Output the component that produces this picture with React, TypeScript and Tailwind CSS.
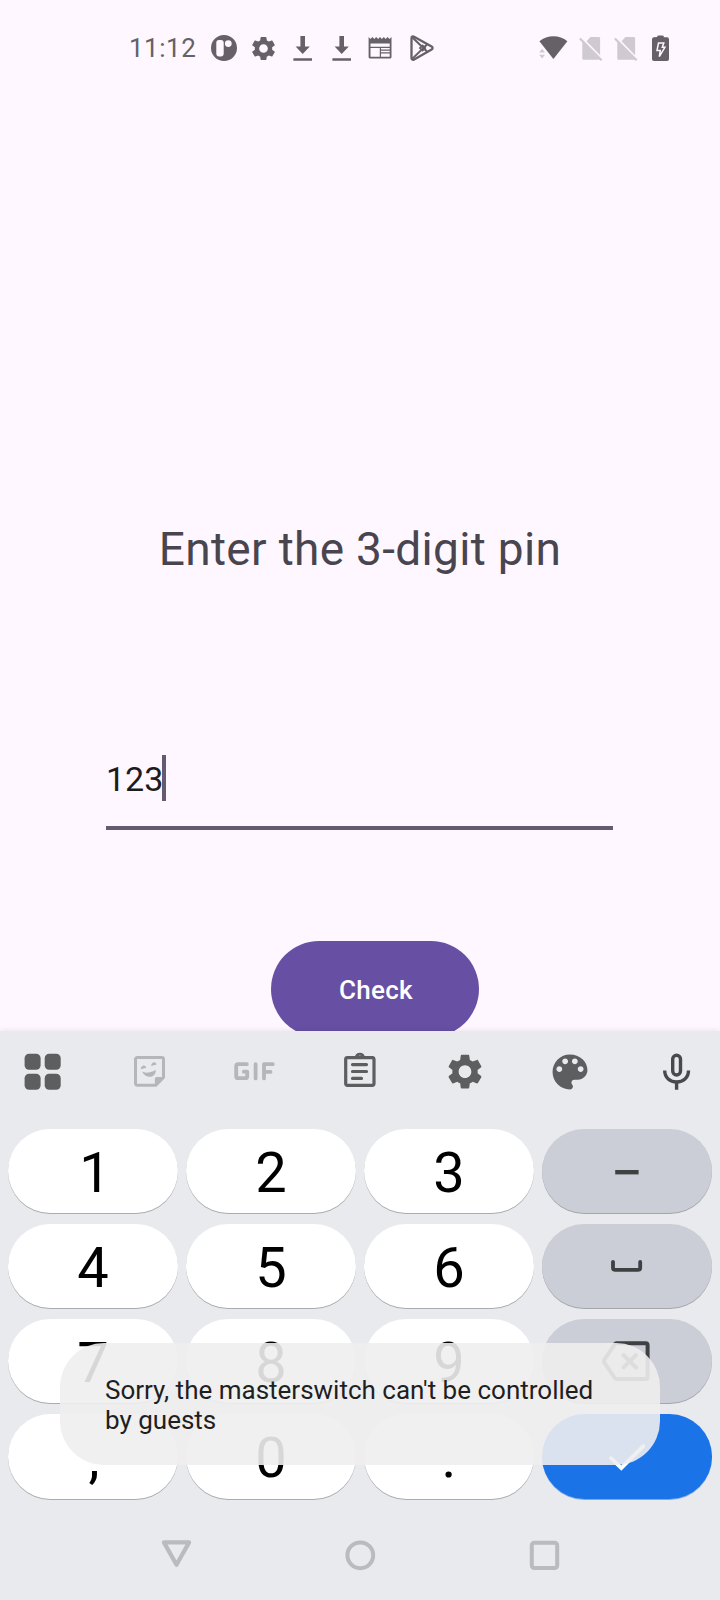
import type { ReactNode } from "react";

type IconProps = { box: string; className: string; children: ReactNode };

function Icon({ box, className, children }: IconProps) {
  return (
    <svg viewBox={box} className={`block shrink-0 ${className}`} fill="currentColor" aria-hidden="true">
      {children}
    </svg>
  );
}

const GEAR =
  "M19.14 12.94c.04-.3.06-.61.06-.94 0-.32-.02-.64-.07-.94l2.03-1.58c.18-.14.23-.41.12-.61l-1.92-3.32c-.12-.22-.37-.29-.59-.22l-2.39.96c-.5-.38-1.03-.7-1.62-.94l-.36-2.54c-.04-.24-.24-.41-.48-.41h-3.84c-.24 0-.43.17-.47.41l-.36 2.54c-.59.24-1.13.57-1.62.94l-2.39-.96c-.22-.08-.47 0-.59.22L2.74 8.87c-.12.21-.08.47.12.61l2.03 1.58c-.05.3-.09.63-.09.94s.02.64.07.94l-2.03 1.58c-.18.14-.23.41-.12.61l1.92 3.32c.12.22.37.29.59.22l2.39-.96c.5.38 1.03.7 1.62.94l.36 2.54c.05.24.24.41.48.41h3.84c.24 0 .44-.17.47-.41l.36-2.54c.59-.24 1.13-.56 1.62-.94l2.39.96c.22.08.47 0 .59-.22l1.92-3.32c.12-.22.07-.47-.12-.61l-2.01-1.58zM12 15.6c-1.98 0-3.6-1.62-3.6-3.6s1.62-3.6 3.6-3.6 3.6 1.62 3.6 3.6-1.62 3.6-3.6 3.6z";

function DownloadIcon() {
  return (
    <Icon box="0 0 20 26" className="h-[26px] w-5">
      <path d="M7.4 1h4.600v10.500h4.800L9.700 18.900 2.600 11.500h4.800zM.4 23.300h18.600v2.500H.4z" />
    </Icon>
  );
}

function SimOffIcon() {
  return (
    <Icon box="0 0 24 26" className="h-[26px] w-6 text-[#cfc9d1]">
      <path d="M11.400 2H19.800a1.300 1.300 0 0 1 1.300 1.300V20.200L7.600 6.300zM3.300 6.500 21 24.700H4.500a1.200 1.200 0 0 1-1.200-1.200z" />
      <path d="M.9 3.400 22.600 25.300" stroke="currentColor" strokeWidth="2.200" />
    </Icon>
  );
}

function StatusBar() {
  return (
    <header className="flex h-24 items-center pl-[129px] text-[#656167]">
      <span className="w-[82px] text-[26px] leading-none tracking-[0.5px]">11:12</span>
      <Icon box="0 0 26 26" className="h-[26px] w-[26px]">
        <path
          fillRule="evenodd"
          d="M13 0a13 13 0 1 1 0 26 13 13 0 0 1 0-26zM8.400 5A2.900 2.900 0 0 0 5.300 8v10.600a2.900 2.900 0 0 0 2.900 2.900h1.600a2.900 2.900 0 0 0 2.900-2.900V8a2.900 2.900 0 0 0-2.900-3zM17.300 5.200a3.400 3.400 0 1 0 0 6.800 3.400 3.400 0 0 0 0-6.800z"
        />
      </Icon>
      <Icon box="0 0 24 24" className="ml-[12px] h-[29px] w-[29px]">
        <path d={GEAR} />
      </Icon>
      <div className="ml-[15px] flex gap-[19px]">
        <DownloadIcon />
        <DownloadIcon />
      </div>
      <Icon box="0 0 24 22" className="ml-4 h-[22px] w-6">
        <path
          fillRule="evenodd"
          d="M.6 0l1.900 2L4.400 0l1.900 2L8.200 0l1.900 2L12 0l1.900 2L15.800 0l1.900 2L19.600 0l1.900 2L23.500 0v20a1.600 1.600 0 0 1-1.600 1.600H2.200A1.600 1.600 0 0 1 .6 20zM2.500 6.500v3.200h19.200V6.500zM2.500 11v8.700h9.300V11zM13 11v1.500h8.700V11zM13 13.800v1.500h8.700v-1.500zM13 16.600v3.100h8.700v-3.100z"
        />
      </Icon>
      <Icon box="0 0 24 26" className="ml-[18px] h-[26px] w-6">
        <g fill="none" stroke="currentColor" strokeWidth="2.300" strokeLinejoin="round">
          <path d="M1.500 3.200c0-1.600 1.300-2.300 2.600-1.500L21.600 11.500c1.300.8 1.300 2.200 0 3L4.100 24.400c-1.300.8-2.600.1-2.600-1.500z" />
          <path d="M2.200 2.200 17.500 17M2.200 23.900 17.500 9" strokeWidth="2" />
        </g>
        <path fillRule="evenodd" d="M12.600 9.200l3.900 3.800-3.900 3.800L8.700 13zM12.600 11.400 10.900 13l1.700 1.600 1.700-1.600z" />
      </Icon>
      <Icon box="0 0 29 26" className="ml-[105px] h-[26px] w-[29px]">
        <path d="M.4 6.200C8.400-.3 20.400-.3 28.400 6.200L14.400 24z" />
        <path d="M.2 17.400 3.100 13.800 6 17.400zM.2 19.800 3.100 23.600 6 19.800z" fill="#cfc9d1" />
      </Icon>
      <div className="ml-[11px] flex gap-[11px]">
        <SimOffIcon />
        <SimOffIcon />
      </div>
      <Icon box="0 0 17 26" className="ml-[14px] h-[26px] w-[17px]">
        <path d="M5.200 2V1.600A1.200 1.200 0 0 1 6.400.6h4.200a1.200 1.200 0 0 1 1.200 1V2.300H15a2 2 0 0 1 2 2v19.600a2 2 0 0 1-2 2H2a2 2 0 0 1-2-2V4.300a2 2 0 0 1 2-2z" />
        <path d="M6.500 8h5.300l-1.500 4.300h2.600L7.300 21.700l1-6.300H5z" fill="none" stroke="#fef7ff" strokeWidth="1.500" />
      </Icon>
    </header>
  );
}

function PinForm() {
  return (
    <main className="flex h-[935px] flex-col overflow-hidden">
      <h1 className="mt-[426px] shrink-0 text-center text-[46px] leading-[54px] tracking-[0.320px] whitespace-nowrap text-[#49454f]">
        Enter the 3-digit pin
      </h1>
      <div className="mt-[179px] ml-[106px] flex h-[75px] w-[507px] shrink-0 items-start border-b-4 border-[#655b71]">
        <span className="w-[56px] text-[34px] leading-[48px] text-[#1d1b20]">123</span>
        <span className="h-[46px] w-1 bg-[#655b71]" />
      </div>
      <button className="mt-[111px] ml-[271px] flex h-24 w-[208px] shrink-0 items-center justify-center rounded-full bg-[#6750a4] pt-0.5 pl-0.5 text-[26px] font-medium tracking-[0.300px] text-white">
        Check
      </button>
    </main>
  );
}

function Toolbar() {
  return (
    <div className="flex h-[98px] items-start pt-[21px] pl-6 text-[#5c5e60]">
      <Icon box="0 0 38 38" className="mt-px h-[38px] w-[38px]">
        <rect x=".6" y=".8" width="16" height="16" rx="4.500" />
        <rect x="20.700" y=".8" width="16" height="16" rx="4.500" />
        <rect x=".6" y="20.800" width="16" height="16" rx="4.500" />
        <rect x="20.700" y="20.800" width="16" height="16" rx="4.500" />
      </Icon>
      <Icon box="0 0 32 38" className="ml-[72px] h-[38px] w-8 text-[#b4b6b9]">
        <path
          d="M3.200 5.600H27.800A1.700 1.700 0 0 1 29.500 7.300V25.500L21.800 33.200H3.200A1.700 1.700 0 0 1 1.500 31.500V7.300A1.700 1.700 0 0 1 3.200 5.600z"
          fill="none"
          stroke="currentColor"
          strokeWidth="3"
        />
        <path d="M20.800 34V27a2 2 0 0 1 2-2H30z" />
        <path d="M8 19.600c3.500 1.900 8.300 1.100 13.700-1.600.6 8.200-10.200 9.400-13.700 1.600zM6.800 17.200c.2-4.100 4.600-4.900 5.400-1.500zM17.200 14c.2-4.100 4.600-4.900 5.400-1.500z" />
      </Icon>
      <Icon box="0 0 42 38" className="ml-[68px] h-[38px] w-[42px] text-[#b4b6b9]">
        <g fill="none" stroke="currentColor" strokeWidth="3.800" strokeLinecap="round" strokeLinejoin="round">
          <path d="M12.800 12.200H4.200a2 2 0 0 0-2 2v10a2 2 0 0 0 2 2h7a2 2 0 0 0 2-2v-4.500H9.800M21.600 12.200v14.200M38.800 12.200H30v14.200M30 19.900h6.500" />
        </g>
      </Icon>
      <Icon box="0 0 32 38" className="ml-[68px] h-[38px] w-8">
        <path
          d="M3.200 5.600H28.800A1.500 1.500 0 0 1 30 7V31.800a1.500 1.500 0 0 1-1.500 1.500H3.200a1.500 1.500 0 0 1-1.500-1.500V7A1.500 1.500 0 0 1 3.200 5.600zM8.500 12.600h14M8.500 19.500h14M8.500 26.400h9"
          fill="none"
          stroke="currentColor"
          strokeWidth="3.200"
          strokeLinecap="round"
        />
        <path fillRule="evenodd" d="M10.500 6C11 2.500 13 .7 15.900.7S20.800 2.500 21.300 6zM15.900 3.500a1.500 1.500 0 1 0 0 3 1.500 1.500 0 0 0 0-3z" />
      </Icon>
      <Icon box="1.200 1.400 21.600 21.600" className="mt-px ml-[70px] h-[38px] w-[38px]">
        <path d={GEAR} />
      </Icon>
      <Icon box="2.200 2.200 19.600 19.600" className="mt-px ml-[67px] h-[38px] w-[38px]">
        <path d="M12 3c-4.970 0-9 4.030-9 9s4.030 9 9 9c.83 0 1.500-.67 1.500-1.500 0-.39-.15-.74-.39-1.010-.23-.26-.38-.61-.38-.99 0-.83.670-1.500 1.500-1.500H16c2.760 0 5-2.240 5-5 0-4.420-4.030-8-9-8zm-5.500 9c-.83 0-1.500-.67-1.500-1.500S5.670 9 6.500 9 8 9.670 8 10.500 7.330 12 6.500 12zm3-4C8.670 8 8 7.330 8 6.500S8.670 5 9.500 5s1.500.67 1.500 1.500S10.330 8 9.500 8zm5 0c-.83 0-1.500-.67-1.500-1.500S13.670 5 14.500 5s1.500.67 1.500 1.500S15.330 8 14.500 8zm3 4c-.83 0-1.500-.67-1.500-1.500S16.670 9 17.500 9s1.500.67 1.500 1.500-.67 1.500-1.500 1.500z" />
      </Icon>
      <Icon box="0 0 28 38" className="mt-px ml-[74px] h-[38px] w-7 text-[#47494c]">
        <g fill="none" stroke="currentColor" strokeWidth="3.400">
          <rect x="9.700" y="2.200" width="7.800" height="19.800" rx="3.900" />
          <path d="M1.700 17.500c0 7.300 5.400 11.400 11.900 11.400s11.900-4.100 11.900-11.400M13.600 29v7.800" />
        </g>
      </Icon>
    </div>
  );
}

type KeyTone = "digit" | "function" | "enter";

const TONES: Record<KeyTone, string> = {
  digit: "bg-white pt-[3px] text-black shadow-[0_1px_0_#a9abae]",
  function: "bg-[#cbced6] text-[#3e4042] shadow-[0_1px_0_#a4a6ab]",
  enter: "bg-[#1b73e8] text-white shadow-[0_1px_0_#7fa9e6]",
};

function Key({ tone = "digit", children }: { tone?: KeyTone; children: ReactNode }) {
  return (
    <button
      className={`flex items-center justify-center rounded-full text-[56px] leading-[80px] ${TONES[tone]}`}
    >
      {children}
    </button>
  );
}

function Keypad() {
  return (
    <div className="grid grid-cols-4 grid-rows-[84px_84px_84px_85px] gap-x-2 gap-y-[11px] px-2">
      <Key>
        <span className="pl-1">1</span>
      </Key>
      <Key>2</Key>
      <Key>3</Key>
      <Key tone="function">
        <Icon box="0 0 50 50" className="h-[50px] w-[50px]">
          <path d="M13.200 24h23.400v4.400H13.200z" />
        </Icon>
      </Key>
      <Key>4</Key>
      <Key>5</Key>
      <Key>6</Key>
      <Key tone="function">
        <Icon box="0 0 50 50" className="h-[50px] w-[50px]">
          <path
            d="M11 20.800v6a2 2 0 0 0 2 2h23.200a2 2 0 0 0 2-2v-6"
            fill="none"
            stroke="currentColor"
            strokeWidth="3.800"
            strokeLinecap="round"
          />
        </Icon>
      </Key>
      <Key>7</Key>
      <Key>8</Key>
      <Key>9</Key>
      <Key tone="function">
        <Icon box="2 0 50 50" className="h-[50px] w-[50px]">
          <path
            d="M15.800 7.300H45.600A2 2 0 0 1 47.600 9.300V41A2 2 0 0 1 45.600 43H17a3 3 0 0 1-2.500-1.300L4.300 26.600a2.500 2.500 0 0 1 0-2.800L14.500 8.600A3 3 0 0 1 17 7.300zM23.500 19 36 31.500M36 19 23.500 31.500"
            fill="none"
            stroke="currentColor"
            strokeWidth="4"
            strokeLinecap="round"
          />
        </Icon>
      </Key>
      <Key>
        <span className="pl-0.5">,</span>
      </Key>
      <Key>0</Key>
      <Key>.</Key>
      <Key tone="enter">
        <Icon box="2 0 50 50" className="h-[50px] w-[50px]">
          <path d="M11 26.200 21.300 36.200 43.300 14.200" fill="none" stroke="currentColor" strokeWidth="3.800" strokeLinecap="round" />
        </Icon>
      </Key>
    </div>
  );
}

function NavigationBar() {
  return (
    <nav className="mt-10 flex items-center justify-center gap-[152px] text-[#b9bbbd]">
      <Icon box="0 0 32 32" className="h-8 w-8">
        <path
          d="M3.900 3.400h25.200L16.500 25.700z"
          fill="none"
          stroke="currentColor"
          strokeWidth="4.200"
          strokeLinejoin="round"
        />
      </Icon>
      <Icon box="0 0 32 32" className="h-8 w-8">
        <circle cx="16.300" cy="16.300" r="12.900" fill="none" stroke="currentColor" strokeWidth="4" />
      </Icon>
      <Icon box="0 0 32 32" className="h-8 w-8">
        <rect x="3.800" y="3.700" width="25.400" height="25.400" rx="2.600" fill="none" stroke="currentColor" strokeWidth="4" />
      </Icon>
    </nav>
  );
}

export default function App() {
  return (
    <div className="relative h-[1600px] w-[720px] overflow-hidden bg-[#fef7ff] font-[Roboto,sans-serif]">
      <StatusBar />
      <PinForm />
      <section className="relative h-[569px] bg-[#e8eaed] shadow-[0_0_6px_rgba(0,0,0,0.1)]">
        <Toolbar />
        <Keypad />
        <NavigationBar />
      </section>
      <div
        role="status"
        className="absolute top-[1343px] left-[60px] h-[122px] w-[600px] rounded-[44px] bg-[#eeeeee]/90 pt-[32px] pl-[45px] text-[26px] leading-[30px] text-[#1f1f1f]"
      >
        Sorry, the masterswitch can't be controlled
        <br />
        by guests
      </div>
    </div>
  );
}
